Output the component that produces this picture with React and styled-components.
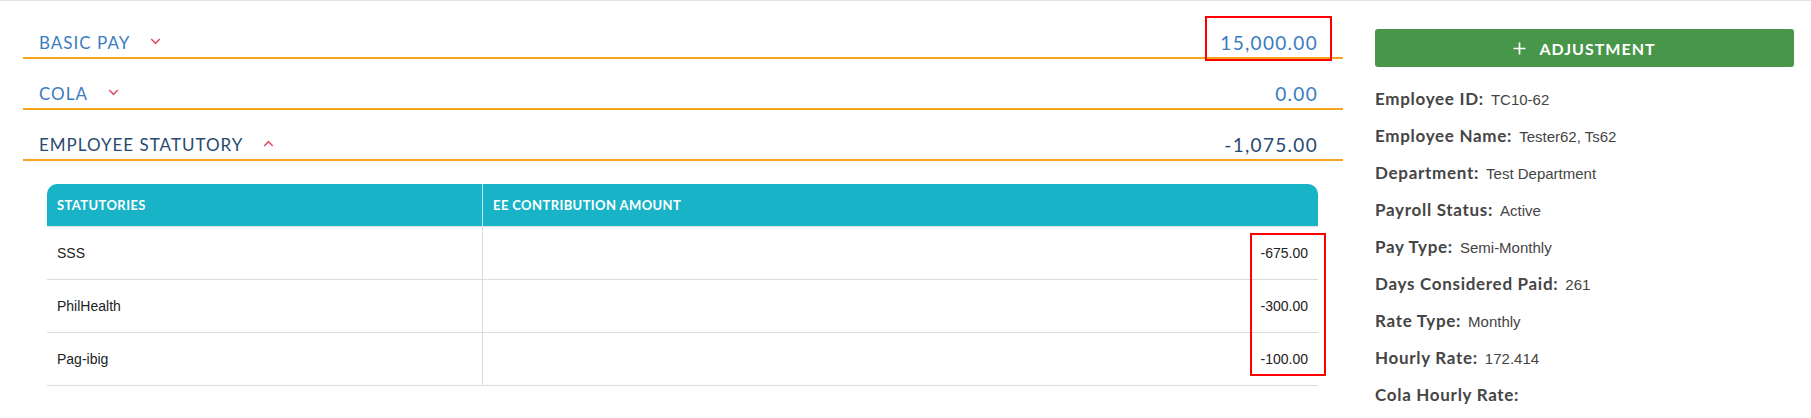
import React from 'react';
import styled, { createGlobalStyle } from 'styled-components';

const GlobalStyle = createGlobalStyle`
  body {
    margin: 0;
    background: #fff;
    font-family: Lato, "Open Sans", sans-serif;
  }
`;

const sections = [
  { id: 1, title: 'BASIC PAY', amount: '15,000.00', open: false, marked: true },
  { id: 2, title: 'COLA', amount: '0.00', open: false },
  { id: 3, title: 'EMPLOYEE STATUTORY', amount: '-1,075.00', open: true },
];

const statutories = [
  { id: 1, name: 'SSS', amount: '-675.00' },
  { id: 2, name: 'PhilHealth', amount: '-300.00' },
  { id: 3, name: 'Pag-ibig', amount: '-100.00' },
];

const details = [
  ['Employee ID:', 'TC10-62'],
  ['Employee Name:', 'Tester62, Ts62'],
  ['Department:', 'Test Department'],
  ['Payroll Status:', 'Active'],
  ['Pay Type:', 'Semi-Monthly'],
  ['Days Considered Paid:', '261'],
  ['Rate Type:', 'Monthly'],
  ['Hourly Rate:', '172.414'],
  ['Cola Hourly Rate:', ''],
];

function Chevron({ up }) {
  return (
    <ChevronIcon width="11" height="7" viewBox="0 0 11 7">
      <polyline
        points={up ? '1.2,6 5.5,1.6 9.8,6' : '1.2,1 5.5,5.4 9.8,1'}
        fill="none"
        stroke="#e4506b"
        strokeWidth="1.6"
      />
    </ChevronIcon>
  );
}

export default function App() {
  return (
    <Page>
      <GlobalStyle />
      <Main>
        {sections.map((s) => (
          <React.Fragment key={s.id}>
            <SectionHeader>
              <SectionTitle open={s.open}>
                {s.title}
                <Chevron up={s.open} />
              </SectionTitle>
              <Amount open={s.open} marked={s.marked}>{s.amount}</Amount>
            </SectionHeader>
            {s.open && (
              <TableWrap>
                <Table>
                  <thead>
                    <tr>
                      <Th first>Statutories</Th>
                      <Th>EE Contribution Amount</Th>
                    </tr>
                  </thead>
                  <tbody>
                    {statutories.map((r) => (
                      <tr key={r.id}>
                        <Td first>{r.name}</Td>
                        <Td right>{r.amount}</Td>
                      </tr>
                    ))}
                  </tbody>
                </Table>
                <Marker />
              </TableWrap>
            )}
          </React.Fragment>
        ))}
      </Main>
      <Side>
        <AddButton>
          <svg width="13" height="13" viewBox="0 0 13 13">
            <path d="M6.5 0.5v12M0.5 6.5h12" stroke="#fff" strokeWidth="1.7" />
          </svg>
          ADJUSTMENT
        </AddButton>
        <Details>
          {details.map(([label, value]) => (
            <DetailRow key={label}>
              <Label>{label}</Label>
              <Value>{value}</Value>
            </DetailRow>
          ))}
        </Details>
      </Side>
    </Page>
  );
}

const Page = styled.div`
  display: flex;
  gap: 32px;
  padding: 0 17px 0 23px;
  border-top: 1px solid #e2e2e2;
  min-height: 417px;
`;

const Main = styled.div`
  flex: 1;
  padding-top: 7px;
`;

const SectionHeader = styled.div`
  box-sizing: border-box;
  height: 51px;
  display: flex;
  align-items: flex-end;
  justify-content: space-between;
  padding: 0 25px 4px 16px;
  border-bottom: 2px solid #f5a41c;
`;

const SectionTitle = styled.div`
  display: flex;
  align-items: center;
  gap: 20px;
  font-size: 17px;
  line-height: 20px;
  letter-spacing: 1px;
  color: ${(p) => (p.open ? '#284a70' : '#3a7cc0')};
`;

const ChevronIcon = styled.svg`
  display: block;
  margin-top: -3px;
`;

const Amount = styled.div`
  position: relative;
  font-size: 19px;
  line-height: 20px;
  letter-spacing: 1.3px;
  color: ${(p) => (p.open ? '#284a70' : '#3a7cc0')};

  ${(p) =>
    p.marked &&
    `
    &::after {
      content: '';
      position: absolute;
      right: -14px;
      width: 127px;
      top: -17px;
      bottom: -8px;
      box-sizing: border-box;
      border: 2px solid #f00;
    }
  `}
`;

const TableWrap = styled.div`
  position: relative;
  margin: 23px 25px 0 24px;
`;

const Table = styled.table`
  width: 100%;
  border-collapse: separate;
  border-spacing: 0;
`;

const Th = styled.th`
  height: 42px;
  padding: 0 10px;
  width: ${(p) => (p.first ? '415px' : 'auto')};
  background: #19b3c7;
  color: #fff;
  font-size: 13px;
  font-weight: 700;
  letter-spacing: 0.4px;
  text-transform: uppercase;
  text-align: left;
  border-right: ${(p) => (p.first ? '1px solid #bfe9ef' : 'none')};
  border-bottom: 1px solid #e4e4e4;
  border-radius: ${(p) => (p.first ? '10px 0 0 0' : '0 10px 0 0')};
`;

const Td = styled.td`
  height: 52px;
  padding: 0 10px;
  font-family: "Liberation Sans", Arial, sans-serif;
  font-size: 14px;
  color: #222;
  text-align: ${(p) => (p.right ? 'right' : 'left')};
  border-bottom: 1px solid #dcdcdc;
  border-right: ${(p) => (p.first ? '1px solid #dcdcdc' : 'none')};
`;

const Marker = styled.div`
  position: absolute;
  top: 49px;
  right: -8px;
  width: 76px;
  height: 143px;
  box-sizing: border-box;
  border: 2px solid #f00;
`;

const Side = styled.div`
  width: 419px;
  padding-top: 28px;
`;

const AddButton = styled.button`
  width: 100%;
  height: 38px;
  display: flex;
  align-items: center;
  justify-content: center;
  gap: 13px;
  border: none;
  border-radius: 3px;
  background: #47964a;
  color: #fff;
  font-family: Lato, sans-serif;
  font-size: 16px;
  font-weight: 700;
  letter-spacing: 1px;
`;

const Details = styled.div`
  margin-top: 13px;
`;

const DetailRow = styled.div`
  display: flex;
  align-items: baseline;
  gap: 7px;
  height: 37px;
  line-height: 37px;
`;

const Label = styled.span`
  font-size: 17px;
  font-weight: 700;
  color: #454545;
  letter-spacing: 0.7px;
`;

const Value = styled.span`
  font-family: "Liberation Sans", Arial, sans-serif;
  font-size: 15px;
  color: #444;
`;
